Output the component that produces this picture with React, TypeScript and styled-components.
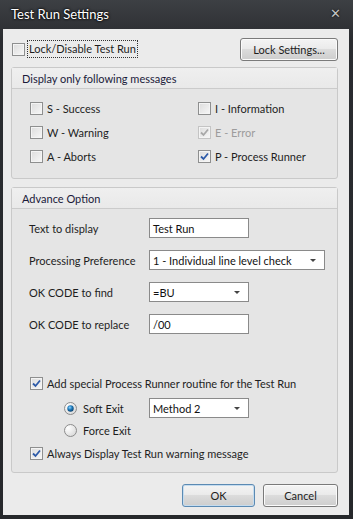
import React from "react";
import styled, { createGlobalStyle } from "styled-components";

const GlobalStyle = createGlobalStyle`
  html, body {
    margin: 0;
    padding: 0;
    background: #2b2e32;
  }
  body {
    font-family: Lato, "Liberation Sans", Arial, sans-serif;
    font-size: 11px;
    color: #1e1e1e;
  }
`;

const Frame = styled.div`
  width: 353px;
  height: 519px;
  box-sizing: border-box;
  display: flex;
  flex-direction: column;
  background: linear-gradient(#3d4044, #2a2c30 40px, #26282b);
  padding: 0 4px 4px 3px;
`;

const TitleBar = styled.div`
  height: 29px;
  display: flex;
  align-items: center;
  justify-content: space-between;
  padding: 0 8px 2px 8px;
  box-sizing: border-box;
`;

const Title = styled.span`
  font-family: Lato, "Liberation Sans", Arial, sans-serif;
  font-size: 13px;
  color: #ffffff;
  text-shadow: 0 0 3px #000, 0 0 2px #000;
`;

const Close = styled.span`
  font-family: "DejaVu Sans", sans-serif;
  font-weight: bold;
  font-size: 13px;
  color: #c4c4c4;
  text-shadow: 0 0 2px #000;
`;

const Client = styled.div`
  flex: 1;
  background: #ebebeb;
  display: flex;
  flex-direction: column;
  padding: 9px 11px 0 8px;
  box-sizing: border-box;
`;

const TopRow = styled.div`
  display: flex;
  align-items: center;
  justify-content: space-between;
  height: 22px;
  margin-bottom: 7px;
`;

const Focus = styled.span`
  outline: 1px dotted #333;
  outline-offset: 1px;
  line-height: 14px;
`;

const Button = styled.button<{ $width: number; $focused?: boolean }>`
  width: ${({ $width }) => $width}px;
  height: 23px;
  font-family: Lato, "Liberation Sans", Arial, sans-serif;
  font-size: 11px;
  color: #1e1e1e;
  border: 1px solid ${({ $focused }) => ($focused ? "#5b8ab3" : "#7a7a7a")};
  border-radius: 3px;
  background: linear-gradient(#f4f4f4, #ebebeb 45%, #dcdcdc 50%, #cdcdcd);
  box-shadow: inset 0 0 0 1px ${({ $focused }) => ($focused ? "#c5dcef" : "#fbfbfb")};
  padding: 0;
`;

const Group = styled.div<{ $height: number }>`
  height: ${({ $height }) => $height}px;
  box-sizing: border-box;
  border: 1px solid #c9c9c9;
  border-radius: 3px;
  background: #e5e5e5;
  display: flex;
  flex-direction: column;
`;

const GroupHeader = styled.div`
  height: 21px;
  box-sizing: border-box;
  border-bottom: 1px solid #cbcbcb;
  background: linear-gradient(#efefef, #e9e9e9);
  padding-left: 10px;
  display: flex;
  align-items: center;
  color: #1a1a3a;
`;

const Spacer = styled.div`
  height: 8px;
`;

const Grid = styled.div`
  display: grid;
  grid-template-columns: 168px 1fr;
  grid-auto-rows: 24px;
  padding: 7px 0 0 18px;
`;

const Item = styled.label<{ $disabled?: boolean; $offset?: number }>`
  display: flex;
  align-items: center;
  gap: 4px;
  margin-left: ${({ $offset }) => $offset || 0}px;
  color: ${({ $disabled }) => ($disabled ? "#9c9c9c" : "#1e1e1e")};
`;

const BoxWrap = styled.span<{ $disabled?: boolean }>`
  width: 13px;
  height: 13px;
  box-sizing: border-box;
  border: 1px solid ${({ $disabled }) => ($disabled ? "#c4c4c4" : "#8e8f8f")};
  background: linear-gradient(135deg, #dcdcdc, #f7f7f7);
  box-shadow: inset 0 0 0 1px #f4f4f4;
  display: inline-flex;
  align-items: center;
  justify-content: center;
  flex-shrink: 0;
`;

const Check = ({ checked, disabled }: { checked?: boolean; disabled?: boolean }) => (
  <BoxWrap $disabled={disabled}>
    {checked && (
      <svg width="9" height="9" viewBox="0 0 9 9">
        <path
          d="M1 4.5 L3.5 7 L8 1.5"
          fill="none"
          stroke={disabled ? "#a8a8a8" : "#2d5aa8"}
          strokeWidth="1.8"
        />
      </svg>
    )}
  </BoxWrap>
);

const Radio = ({ checked }: { checked?: boolean }) => (
  <svg width="13" height="13" viewBox="0 0 13 13">
    <defs>
      <radialGradient id="rbg" cx="0.3" cy="0.3" r="0.9">
        <stop offset="0" stopColor="#ffffff" />
        <stop offset="1" stopColor="#d4d4d4" />
      </radialGradient>
      <radialGradient id="rdot" cx="0.4" cy="0.35" r="0.7">
        <stop offset="0" stopColor="#8fd4ff" />
        <stop offset="0.5" stopColor="#1b77b8" />
        <stop offset="1" stopColor="#0c3d66" />
      </radialGradient>
    </defs>
    <circle cx="6.5" cy="6.5" r="6" fill="url(#rbg)" stroke="#8c8c8c" strokeWidth="1" />
    {checked && <circle cx="6.5" cy="6.5" r="3.2" fill="url(#rdot)" />}
  </svg>
);

const Form = styled.div`
  display: flex;
  flex-direction: column;
  padding: 9px 0 0 17px;
`;

const FieldRow = styled.div`
  display: flex;
  align-items: center;
  height: 20px;
  margin-bottom: 12px;
`;

const FieldLabel = styled.span`
  width: 120px;
  white-space: nowrap;
  color: #1e1e1e;
`;

const TextBox = styled.div<{ $width: number }>`
  width: ${({ $width }) => $width}px;
  height: 20px;
  box-sizing: border-box;
  border: 1px solid #8a8a8a;
  background: #ffffff;
  display: flex;
  align-items: center;
  padding-left: 3px;
  position: relative;
  color: #111;
`;

const Arrow = styled.span`
  position: absolute;
  right: 8px;
  top: 8px;
  width: 0;
  height: 0;
  border-left: 3px solid transparent;
  border-right: 3px solid transparent;
  border-top: 3px solid #444;
`;

const Options = styled.div`
  display: flex;
  flex-direction: column;
  padding: 26px 0 0 18px;
`;

const OptRow = styled.div<{ $indent?: number; $gap?: number }>`
  display: flex;
  align-items: center;
  height: 22px;
  margin-top: ${({ $gap }) => $gap || 0}px;
  padding-left: ${({ $indent }) => $indent || 0}px;
`;

const RadioLabel = styled.label`
  display: flex;
  align-items: center;
  gap: 6px;
  width: 85px;
`;

const Footer = styled.div`
  display: flex;
  justify-content: flex-end;
  gap: 8px;
  margin-top: 11px;
`;

const App = () => {
  return (
    <>
      <GlobalStyle />
      <Frame>
        <TitleBar>
          <Title>Test Run Settings</Title>
          <Close>✕</Close>
        </TitleBar>
        <Client>
          <TopRow>
            <Item $offset={1}>
              <Check />
              <Focus>Lock/Disable Test Run</Focus>
            </Item>
            <Button $width={98}>Lock Settings...</Button>
          </TopRow>

          <Group $height={112}>
            <GroupHeader>Display only following messages</GroupHeader>
            <Grid>
              <Item>
                <Check />S - Success
              </Item>
              <Item>
                <Check />I - Information
              </Item>
              <Item>
                <Check />W - Warning
              </Item>
              <Item $disabled>
                <Check checked disabled />E - Error
              </Item>
              <Item>
                <Check />A - Aborts
              </Item>
              <Item>
                <Check checked />P - Process Runner
              </Item>
            </Grid>
          </Group>

          <Spacer />

          <Group $height={286}>
            <GroupHeader>Advance Option</GroupHeader>
            <Form>
              <FieldRow>
                <FieldLabel>Text to display</FieldLabel>
                <TextBox $width={100}>Test Run</TextBox>
              </FieldRow>
              <FieldRow>
                <FieldLabel>Processing Preference</FieldLabel>
                <TextBox $width={176}>
                  1 - Individual line level check
                  <Arrow />
                </TextBox>
              </FieldRow>
              <FieldRow>
                <FieldLabel>OK CODE to find</FieldLabel>
                <TextBox $width={100}>
                  =BU
                  <Arrow />
                </TextBox>
              </FieldRow>
              <FieldRow>
                <FieldLabel>OK CODE to replace</FieldLabel>
                <TextBox $width={100}>/00</TextBox>
              </FieldRow>
            </Form>
            <Options>
              <OptRow>
                <Item>
                  <Check checked />
                  Add special Process Runner routine for the Test Run
                </Item>
              </OptRow>
              <OptRow $indent={34} $gap={3}>
                <RadioLabel>
                  <Radio checked />
                  Soft Exit
                </RadioLabel>
                <TextBox $width={100}>
                  Method 2
                  <Arrow />
                </TextBox>
              </OptRow>
              <OptRow $indent={34}>
                <RadioLabel>
                  <Radio />
                  Force Exit
                </RadioLabel>
              </OptRow>
              <OptRow $gap={1}>
                <Item>
                  <Check checked />
                  Always Display Test Run warning message
                </Item>
              </OptRow>
            </Options>
          </Group>

          <Footer>
            <Button $width={73} $focused>
              OK
            </Button>
            <Button $width={75}>Cancel</Button>
          </Footer>
        </Client>
      </Frame>
    </>
  );
};

export default App;
